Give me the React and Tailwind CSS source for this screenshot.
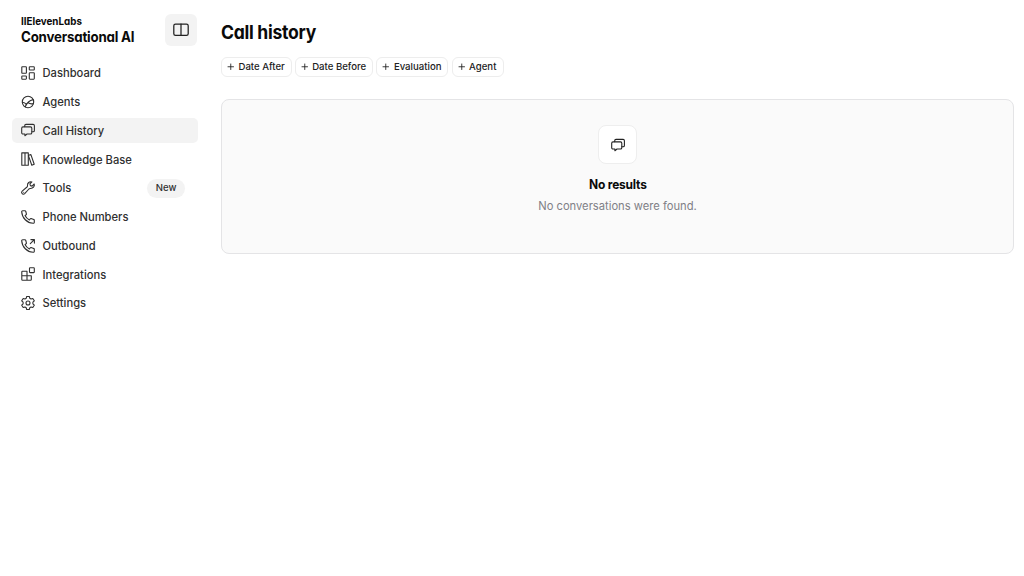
import { Plus } from "lucide-react";

const Icon = ({ children, className = "size-[14px]" }) => (
  <svg
    viewBox="0 0 14 14"
    fill="none"
    stroke="currentColor"
    strokeWidth="1.1"
    strokeLinecap="round"
    strokeLinejoin="round"
    className={`shrink-0 overflow-visible ${className}`}
  >
    {children}
  </svg>
);

const ChatsIcon = ({ className }) => (
  <Icon className={className}>
    <path d="M3.700 3.600V2.700c0-.8.5-1.300 1.300-1.300h7.100c.8 0 1.300.5 1.300 1.300v4.700c0 .8-.5 1.300-1.300 1.300h-1.300" />
    <path d="M2 3.900h7.500c.8 0 1.300.5 1.300 1.300v4.500c0 .8-.5 1.300-1.300 1.300H6l-2.100 1.700V11H2C1.200 11 .7 10.500.7 9.700V5.200C.7 4.400 1.200 3.900 2 3.900Z" />
  </Icon>
);

const phonePath =
  "M3.900.8H1.700C1.100.8.6 1.300.700 1.900 1.100 8 6 12.900 12.100 13.300c.6.1 1.200-.4 1.200-1V10.300c0-.4-.3-.8-.7-.9L10.200 8.600c-.4-.1-.8 0-1 .3l-.8 1.100C6.400 9 5 7.600 4 5.600l1.100-.8c.3-.2.4-.6.3-1L4.800 1.500C4.700 1.100 4.300.8 3.900.8Z";

const navItems = [
  {
    label: "Dashboard",
    icon: (
      <Icon>
        <rect x=".8" y=".8" width="4.600" height="6.500" rx=".6" />
        <rect x="8.300" y=".8" width="5" height="3.200" rx=".6" />
        <rect x=".8" y="10" width="4.600" height="3.200" rx=".6" />
        <rect x="8.300" y="6.700" width="5" height="6.500" rx=".6" />
      </Icon>
    )
  },
  {
    label: "Agents",
    icon: (
      <Icon>
        <circle cx="7" cy="7" r="5.700" />
        <path d="M1.400 7.200c1.700.1 2.900.8 3.800 2.200M12.200 4.600C8.600 5.300 5.800 7.800 4.300 11.700M7.200 7.800c1.400 1 3 1.300 5.200.8" />
      </Icon>
    )
  },
  { label: "Call History", icon: <ChatsIcon />, active: true },
  {
    label: "Knowledge Base",
    icon: (
      <Icon>
        <path d="M.8.9H4v12.300H.8ZM4 .9h3.300v12.300H4Z" />
        <path d="m7.500 3.300 2.400-.7 3.300 9.700-2.400.9-3.300-9.300" />
      </Icon>
    )
  },
  {
    label: "Tools",
    badge: "New",
    icon: (
      <Icon>
        <path d="M10.900.9C8.500.1 6.200 2.100 6.500 4.600c.1.600-.1 1-.5 1.400L1.200 10.100c-1.700 1.600.7 4.300 2.500 2.600L7.900 8c.4-.4.8-.6 1.400-.5 2.600.2 4.700-2.100 3.900-4.500l-2.100 2.100-1.700-.5-.5-1.700Z" />
        <path d="M2.700 11.300h.01" />
      </Icon>
    )
  },
  {
    label: "Phone Numbers",
    icon: (
      <Icon>
        <path d={phonePath} />
      </Icon>
    )
  },
  {
    label: "Outbound",
    icon: (
      <Icon>
        <path d={phonePath} />
        <path d="m9.300 4.700 4-4M9.900.6h3.500v3.500" />
      </Icon>
    )
  },
  {
    label: "Integrations",
    icon: (
      <Icon>
        <path d="M1.500 4.200H6v4.500h4.300V12.500c0 .4-.3.7-.7.7H1.500c-.4 0-.7-.3-.7-.7V4.900c0-.4.3-.7.7-.7ZM.8 8.700H6v4.500" />
        <rect x="8.500" y=".8" width="4.800" height="4.800" rx=".6" />
      </Icon>
    )
  },
  {
    label: "Settings",
    icon: (
      <Icon>
        <path d="M5.700.5h2.600l.5 1.800 1.200.7 1.800-.5 1.500 2.300-1.400 1.400v1.600l1.400 1.400-1.500 2.300-1.800-.5-1.200.7-.5 1.800H5.700l-.5-1.800-1.200-.7-1.800.5L.7 9.200l1.400-1.400V6.200L.7 4.800l1.500-2.300 1.800.5 1.200-.7Z" />
        <circle cx="7" cy="7" r="2" />
      </Icon>
    )
  }
];

const filters = [
  { label: "Date After", width: "w-[70.500px]" },
  { label: "Date Before", width: "w-[78.500px]" },
  { label: "Evaluation", width: "w-[72px]" },
  { label: "Agent", width: "w-[52px]" }
];

function Sidebar() {
  return (
    <aside className="w-[209px] shrink-0 pl-3 pt-[13.500px]">
      <div className="flex h-8 justify-between pl-[9px] pr-3">
        <div className="w-[130px] font-bold whitespace-nowrap text-[#0a0a0a] [font-feature-settings:'cv11']">
          <div className="mt-[2px] origin-left scale-x-[0.935] text-[10.500px] leading-[12px]">
            IIElevenLabs
          </div>
          <div className="origin-left scale-x-[0.925] text-[14.400px] leading-[18px] tracking-[-0.22px]">
            Conversational AI
          </div>
        </div>
        <button className="flex size-8 items-center justify-center rounded-md bg-[#f3f3f3] text-[#222]">
          <Icon className="size-4">
            <rect x=".7" y="1.800" width="12.600" height="10" rx="1.500" />
            <path d="M7 1.800v10" />
          </Icon>
        </button>
      </div>

      <nav className="mt-[14.600px] flex w-[186px] flex-col gap-[3.200px]">
        {navItems.map((item) => (
          <a
            key={item.label}
            className={`flex h-[25.600px] items-center rounded-[5px] pl-[9px] pr-[13px] text-[11.200px] font-medium text-[#303030] ${
              item.active ? "bg-[#f3f3f3]" : ""
            }`}
          >
            {item.icon}
            <span className="ml-[7.500px] pt-[1.400px]">{item.label}</span>
            {item.badge && (
              <span className="ml-auto flex h-[19px] w-[38px] items-center justify-center rounded-full bg-[#f3f3f3] text-[9.600px]">
                {item.badge}
              </span>
            )}
          </a>
        ))}
      </nav>
    </aside>
  );
}

export default function App() {
  return (
    <div className="flex h-screen overflow-hidden bg-white font-['Inter',sans-serif]">
      <Sidebar />
      <main className="flex-1 pl-3 pr-[10px] pt-5">
        <h1 className="origin-left scale-x-[0.915] text-[19.200px] leading-[25px] font-bold tracking-[-0.3px] text-[#0a0a0a] [font-feature-settings:'cv11']">
          Call history
        </h1>

        <div className="mt-[12px] flex gap-[3.200px]">
          {filters.map((filter) => (
            <button
              key={filter.label}
              className={`flex h-5 items-center rounded-md border border-[#ededed] pl-[4px] text-[9.600px] font-medium whitespace-nowrap text-[#222] ${filter.width}`}
            >
              <Plus className="mr-[3px] size-[9.500px] shrink-0" strokeWidth={2.200} />
              <span className="pt-px">{filter.label}</span>
            </button>
          ))}
        </div>

        <section className="mt-[22px] flex h-[155px] flex-col items-center rounded-lg border border-[#e4e4e6] bg-[#fafafa] pt-[25px]">
          <div className="flex size-[39px] items-center justify-center rounded-lg border border-[#eeeeee] bg-white text-[#222]">
            <ChatsIcon className="size-[14px]" />
          </div>
          <h2 className="mt-[11px] scale-x-[0.935] text-[12.800px] leading-5 font-bold tracking-[-0.2px] text-[#0a0a0a]">
            No results
          </h2>
          <p className="mt-[2px] text-[11.200px] leading-[18px] text-[#808086]">
            No conversations were found.
          </p>
        </section>
      </main>
    </div>
  );
}
